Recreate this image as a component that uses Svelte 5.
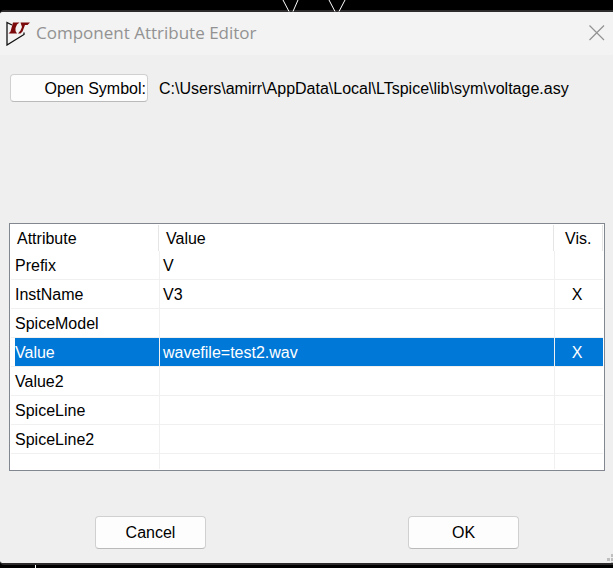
<script>
  let attributes = [
    { name: 'Prefix', value: 'V', visible: false },
    { name: 'InstName', value: 'V3', visible: true },
    { name: 'SpiceModel', value: '', visible: false },
    { name: 'Value', value: 'wavefile=test2.wav', visible: true },
    { name: 'Value2', value: '', visible: false },
    { name: 'SpiceLine', value: '', visible: false },
    { name: 'SpiceLine2', value: '', visible: false },
  ];
  let selected = $state('Value');
</script>

<div class="schematic">
  <svg class="wires" width="70" height="12" viewBox="0 0 70 12" aria-hidden="true">
    <path d="M3 0l6 11.5M18 0l-5 11.5M49 0l6 11.5M65 0l-6 11.5" />
  </svg>

  <main class="dialog">
    <header>
      <svg class="logo" width="24" height="27" viewBox="0 -3 24 27" aria-hidden="true">
        <path d="M6 3L1 0.5v22.5l17-10.5v-2" fill="none" stroke="#111" stroke-width="1.3" />
        <path d="M7 0.5h6.5l-2.5 2-1.5 3.5v3l1.5 2.5H2.5l2-2z" fill="#7c0a0c" />
        <path d="M14.5 0.5H24l-2.5 2.500h-2.500l-2.500 6.500-2 2h-2.500l2.500-3 1.500-3.500z" fill="#7c0a0c" />
      </svg>
      <h1>Component Attribute Editor</h1>
      <button class="close" aria-label="Close">
        <svg width="16" height="16" viewBox="0 0 16 16" aria-hidden="true">
          <path d="M0.5 0.5l14.500 14.500M15 0.5l-14.500 14.500" />
        </svg>
      </button>
    </header>

    <div class="symbol">
      <button class="open">Open Symbol:</button>
      <span>C:\Users\amirr\AppData\Local\LTspice\lib\sym\voltage.asy</span>
    </div>

    <div class="list">
      <table>
        <thead>
          <tr>
            <th class="name"><span>Attribute</span></th>
            <th><span>Value</span></th>
            <th class="vis"><span>Vis.</span></th>
          </tr>
        </thead>
        <tbody>
          {#each attributes as attribute}
            <tr class:selected={attribute.name === selected} onclick={() => (selected = attribute.name)}>
              <td class="name">{attribute.name}</td>
              <td class="value">{attribute.value}</td>
              <td class="vis">{attribute.visible ? 'X' : ''}</td>
            </tr>
          {/each}
          <tr class="rest">
            <td></td>
            <td></td>
            <td class="vis"></td>
          </tr>
        </tbody>
      </table>
    </div>

    <footer>
      <button>Cancel</button>
      <button>OK</button>
    </footer>

    <svg class="grip" width="7" height="9" viewBox="0 0 7 9" aria-hidden="true">
      <path d="M4 0h3v3h-3zM0 4h3v3h-3zM4 4h3v3h-3zM4 8h3v1h-3z" />
    </svg>
  </main>

  <div class="wire"></div>
</div>

<style>
  :global(body) {
    background: #000;
  }

  .schematic {
    position: relative;
    padding-top: 10px;
    font: 16px/20px "Liberation Sans", Arial, sans-serif;
    color: #000;
  }

  .wires {
    position: absolute;
    z-index: 1;
    top: 0;
    left: 280px;
    fill: none;
    stroke: #fff;
  }

  .wire {
    width: 1px;
    height: 3px;
    margin-left: 35px;
    background: #fff;
  }

  .dialog {
    position: relative;
    border: solid #2d2b2b;
    border-width: 2px 0;
    border-radius: 4px 0 0 4px;
    background: #efefef;
  }

  header {
    display: flex;
    align-items: center;
    height: 41px;
    padding: 0 8px 2px 6px;
    border-top-left-radius: 3px;
    background: #f3f3f3;
  }

  h1 {
    flex: 1;
    margin: 0 0 0 6px;
    font: 17px/24px "Open Sans", "Segoe UI", sans-serif;
    color: #929292;
  }

  button {
    width: 111px;
    height: 33px;
    padding: 0;
    border: 1px solid #d0d0d0;
    border-bottom-color: #bababa;
    border-radius: 4px;
    background: #fdfdfd;
    font: inherit;
    color: inherit;
  }

  .close {
    display: flex;
    width: 16px;
    height: 16px;
    border: 0;
    background: none;
  }

  .close path {
    stroke: #929292;
    stroke-width: 1.2;
  }

  .symbol {
    display: flex;
    align-items: center;
    gap: 11px;
    padding: 19px 10px 0;
  }

  .symbol span {
    padding-top: 2px;
  }

  .open {
    width: 138px;
    height: 28px;
    padding: 2px 1px 0 0;
    text-align: right;
  }

  .list {
    margin: 121px 8px 0 9px;
    padding: 1px;
    border: 1px solid #828790;
    background: #fff;
  }

  table {
    width: 100%;
    table-layout: fixed;
    border-spacing: 0;
  }

  th {
    padding: 0 1px 0 0;
    font-weight: normal;
    text-align: left;
  }

  th span {
    display: block;
    padding: 2px 0 0 6px;
    border-right: 1px solid #e5e5e5;
    line-height: 24px;
  }

  th.name {
    width: 148px;
  }

  th.vis {
    width: 48px;
    padding: 0;
  }

  th.vis span {
    padding-left: 10px;
  }

  td {
    height: 26px;
    padding: 2px 0 0;
    border: solid #f0f0f0;
    border-width: 0 1px 1px 0;
    line-height: 26px;
  }

  td.name {
    padding-left: 4px;
  }

  td.value {
    padding-left: 3px;
  }

  td.vis {
    padding-right: 4px;
    border-right: 0;
    text-align: center;
  }

  .selected td {
    background: #0078d7 padding-box;
    color: #fff;
  }

  .selected td.name {
    background: linear-gradient(90deg, #fff 4px, #0078d7 4px) padding-box;
  }

  .rest td {
    height: 13px;
    border-bottom: 0;
  }

  footer {
    display: flex;
    justify-content: space-between;
    padding: 45px 94px 14px 95px;
  }

  .grip {
    position: absolute;
    right: -1px;
    bottom: 0;
    fill: #bfbfbf;
  }
</style>
